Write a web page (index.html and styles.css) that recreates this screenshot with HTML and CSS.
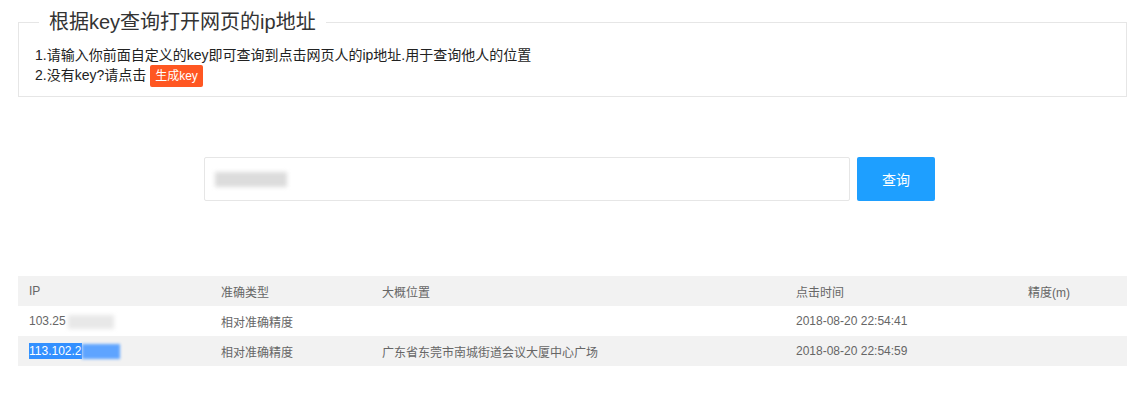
FILE: index.html
```html
<!doctype html>
<html>
<head>
<meta charset="utf-8">
<title>根据key查询打开网页的ip地址</title>
<link rel="stylesheet" href="styles.css">
</head>
<body>
<div class="wrap">
    <fieldset class="box">
        <legend>根据key查询打开网页的ip地址</legend>
        <p>1.请输入你前面自定义的key即可查询到点击网页人的ip地址.用于查询他人的位置</p>
        <p>2.没有key?请点击 <a class="btn-key" href="#">生成key</a></p>
    </fieldset>

    <div class="search">
        <div class="input"><span class="blur-gray"></span></div>
        <button class="btn-query">查询</button>
    </div>

    <table class="list">
        <colgroup>
            <col class="c1"><col class="c2"><col class="c3"><col class="c4"><col>
        </colgroup>
        <thead>
            <tr><th>IP</th><th>准确类型</th><th>大概位置</th><th>点击时间</th><th>精度(m)</th></tr>
        </thead>
        <tbody>
            <tr>
                <td>103.25<span class="blur-ip"></span></td>
                <td>相对准确精度</td>
                <td></td>
                <td>2018-08-20 22:54:41</td>
                <td></td>
            </tr>
            <tr>
                <td><span class="sel">113.102.2</span><span class="blur-sel"></span></td>
                <td>相对准确精度</td>
                <td>广东省东莞市南城街道会议大厦中心广场</td>
                <td>2018-08-20 22:54:59</td>
                <td></td>
            </tr>
        </tbody>
    </table>
</div>
</body>
</html>
```

FILE: styles.css
```css
body {
    margin: 0;
    background: #fff;
    color: #333;
    font-family: "Liberation Sans", "Noto Sans CJK SC", sans-serif;
}
.wrap {
    margin: 0 13px 0 18px;
    padding-top: 8px;
}
.box {
    margin: 0;
    border: 1px solid #e6e6e6;
    padding: 9px 16px 9px 16px;
}
.box legend {
    padding: 0 10px;
    margin-left: 4px;
    font-size: 20px;
    line-height: 28px;
    color: #333;
}
.box p {
    margin: 0;
    font-size: 14px;
    line-height: 20px;
    color: #222;
}
.btn-key {
    display: inline-block;
    height: 22px;
    line-height: 22px;
    padding: 0 5px;
    background: #ff5722;
    color: #fff;
    font-size: 12px;
    border-radius: 2px;
    text-decoration: none;
    vertical-align: middle;
}
.search {
    display: flex;
    gap: 7px;
    margin: 60px 0 0 186px;
}
.input {
    width: 646px;
    height: 44px;
    box-sizing: border-box;
    border: 1px solid #e6e6e6;
    border-radius: 2px;
    display: flex;
    align-items: center;
    padding-left: 10px;
}
.blur-gray {
    display: block;
    width: 72px;
    height: 15px;
    background: #dcdcdc;
    filter: blur(2px);
}
.btn-query {
    width: 78px;
    height: 44px;
    border: 0;
    border-radius: 2px;
    background: #1e9fff;
    color: #fff;
    font-size: 14px;
    font-family: "Liberation Sans", "Noto Sans CJK SC", sans-serif;
}
.list {
    margin-top: 75px;
    width: 100%;
    border-collapse: collapse;
    table-layout: fixed;
    font-size: 12px;
    color: #666;
}
.list col.c1 { width: 192px; }
.list col.c2 { width: 161px; }
.list col.c3 { width: 414px; }
.list col.c4 { width: 232px; }
.list th, .list td {
    height: 30px;
    padding: 0 11px;
    text-align: left;
    font-weight: normal;
    white-space: nowrap;
}
.list thead tr, .list tbody tr:nth-child(2) {
    background: #f2f2f2;
}
.blur-ip {
    display: inline-block;
    width: 46px;
    height: 14px;
    vertical-align: middle;
    background: #e8e8e8;
    filter: blur(2px);
    margin-left: 2px;
}
.sel {
    background: #3390ff;
    color: #fff;
    padding: 1px 0;
}
.blur-sel {
    display: inline-block;
    width: 38px;
    height: 15px;
    vertical-align: middle;
    background: #5ea4ff;
    filter: blur(1.5px);
}
```
